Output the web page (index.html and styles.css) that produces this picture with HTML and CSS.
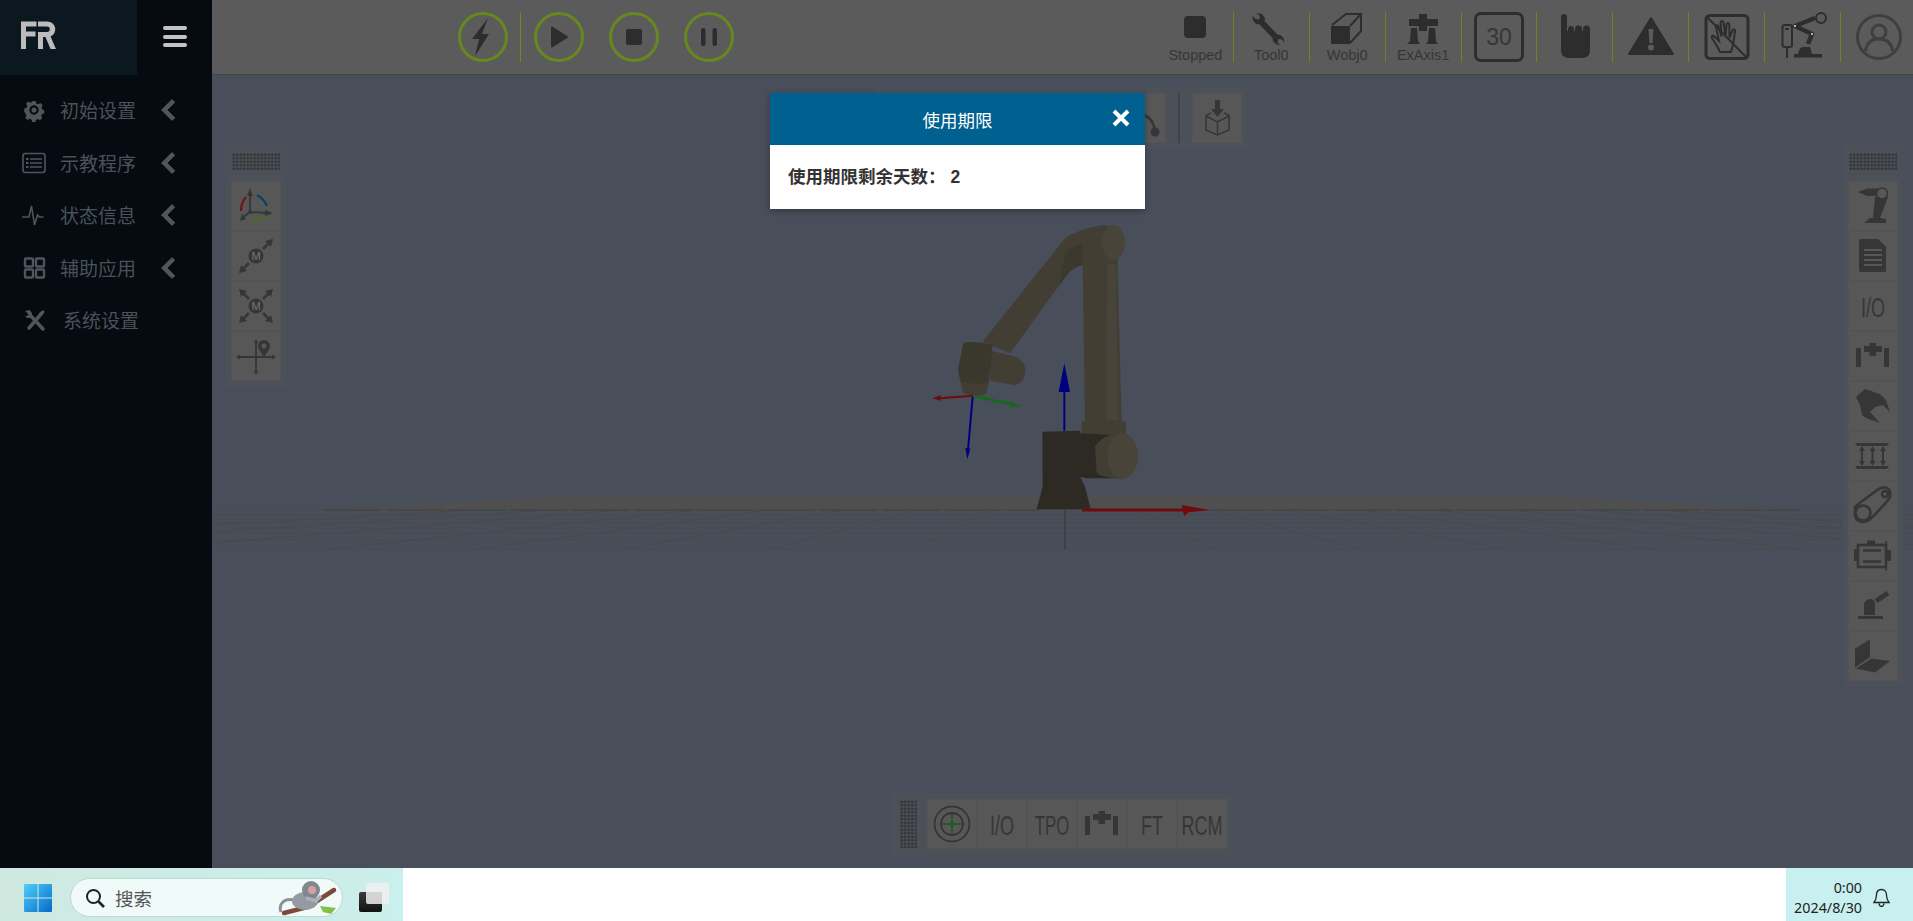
FILE: index.html
```html
<!DOCTYPE html>
<html lang="zh">
<head>
<meta charset="utf-8">
<title>使用期限</title>
<link rel="stylesheet" href="styles.css">
</head>
<body>
<div class="app">
  <div class="main">
    <aside class="sidebar">
      <div class="side-head">
        <div class="logo">
          <svg width="137" height="75" viewBox="0 0 137 75"><path class="logo-fill" d="M21 21.500h15.500v5H26v5h9.500v5H26v12.500h-5zM38 21.500h9.500a7.800 7.800 0 0 1 3 15L56 49h-5.500l-5-12H43v12h-5V32h9a2.700 2.700 0 0 0 0-5.500h-9z"/></svg>
        </div>
        <div class="burger"><span></span><span></span><span></span></div>
      </div>
      <nav class="menu">
        <div class="menu-row">
          <svg class="menu-ic" viewBox="0 0 24 24"><g transform="translate(1.800 1.800) scale(.85)"><path class="m-f" fill-rule="evenodd" d="M10 1.500h4l.7 2.800 2.300 1 2.500-1.500 2.700 2.800-1.500 2.500 1 2.300 2.300.6v4l-2.600.7-1 2.300 1.400 2.400-2.800 2.700-2.400-1.400-2.300 1-.7 2.300h-3.800l-.7-2.600-2.300-1-2.400 1.400-2.800-2.700 1.500-2.400-1-2.300L.5 14v-3.800l2.600-.7 1-2.300-1.500-2.500 2.800-2.800 2.500 1.500 2.300-1zM12 6.500a5.500 5.500 0 1 0 0 11 5.500 5.500 0 0 0 0-11zm0 2.500a3 3 0 1 1 0 6 3 3 0 0 1 0-6z"/></g></svg>
          <span class="menu-text">初始设置</span><i class="chev"></i>
        </div>
        <div class="menu-row">
          <svg class="menu-ic" viewBox="0 0 24 24"><rect class="m-s" x="1" y="2.500" width="22" height="19" rx="2.500"/><path class="m-s" d="M8 8h12M8 12h12M8 16h12"/><path class="m-f" d="M4 7h2.500v2H4zM4 11h2.500v2H4zM4 15h2.500v2H4z"/></svg>
          <span class="menu-text">示教程序</span><i class="chev"></i>
        </div>
        <div class="menu-row">
          <svg class="menu-ic" viewBox="0 0 24 24"><path class="m-s" d="M0 14h7l2.500-11 3 19 3-10 2 2h4"/></svg>
          <span class="menu-text">状态信息</span><i class="chev"></i>
        </div>
        <div class="menu-row">
          <svg class="menu-ic" viewBox="0 0 24 24"><rect class="m-t" x="3" y="2.500" width="8" height="8" rx="1"/><rect class="m-t" x="14" y="2.500" width="8" height="8" rx="1"/><rect class="m-t" x="3" y="13.500" width="8" height="8" rx="1"/><rect class="m-t" x="14" y="13.500" width="8" height="8" rx="1"/></svg>
          <span class="menu-text">辅助应用</span><i class="chev"></i>
        </div>
        <div class="menu-row">
          <svg class="menu-ic" viewBox="0 0 24 24"><path class="m-b" d="M8 7l13 14"/><path class="m-b" d="M20 5L7 20"/><path class="m-f" d="M3 3l4.500-1 2.500 3v2.500L7.500 10H5L2.500 7.500l2.500.8 1.500-2zM21.500 2l1 2-3 3.500-2.500-2.500z"/></svg>
          <span class="menu-text menu-text-wide">系统设置</span>
        </div>
      </nav>
    </aside>

    <section class="content">
      <header class="topbar">
        <div class="run-group">
          <button class="circle-btn circle-sep"><svg width="44" height="44" viewBox="0 0 44 44"><path class="d-f" d="M27 3L21 19h7L14 41l4-17h-7z"/></svg></button>
          <button class="circle-btn"><svg width="44" height="44" viewBox="0 0 44 44"><path class="d-f d-round" d="M15 12.500l15 9.500-15 9.500z"/></svg></button>
          <button class="circle-btn"><svg width="44" height="44" viewBox="0 0 44 44"><rect class="d-f" x="14" y="14" width="16" height="16" rx="2"/></svg></button>
          <button class="circle-btn"><svg width="44" height="44" viewBox="0 0 44 44"><rect class="d-f" x="14" y="13" width="4.500" height="18" rx="2"/><rect class="d-f" x="25.500" y="13" width="4.500" height="18" rx="2"/></svg></button>
        </div>
        <div class="status-group">
          <div class="status-item">
            <svg width="50" height="35" viewBox="0 0 50 35"><rect class="d-f" x="14" y="4" width="22" height="22" rx="4"/></svg>
            <span class="status-label">Stopped</span>
          </div>
          <div class="status-item">
            <svg width="50" height="35" viewBox="0 0 50 35"><path class="d-f" d="M10 1l6 1 3 4-.5 3 13 13.500 3 .5 3 3 1 5-2.500-3.500-3.500-.5-1 3.500 3 2.500-4-.5-3.500-3-.5-3.500-13-13.500-3.500-.5-3-3.500-.5-5 3 3.500 3.500.5 1-3.500z"/></svg>
            <span class="status-label">Tool0</span>
          </div>
          <div class="status-item">
            <svg width="50" height="35" viewBox="0 0 50 35"><path class="d-f" d="M9 14h19v18H9z"/><path class="d-o" d="M10 13L24 2h15v17L28 31M28 14L39 2"/></svg>
            <span class="status-label">Wobj0</span>
          </div>
          <div class="status-item">
            <svg width="50" height="35" viewBox="0 0 50 35"><path class="d-f" d="M21 2h8v5h11v7H29v5h-8v-5H11V7h10zM13 16h6l1 13 2 3H9l3-3zM31 16h6l1 13 2 3H28l2-3z"/></svg>
            <span class="status-label">ExAxis1</span>
          </div>
          <div class="status-item">
            <div class="speed-box">30</div>
          </div>
          <div class="status-item">
            <svg width="50" height="50" viewBox="0 0 50 50"><path class="d-f" d="M11 5a3 3 0 0 1 6 0V19h1v-2a3 3 0 0 1 6 0v2h1v-2a3.500 3.500 0 0 1 7 0v2h1v-2a3.500 3.500 0 0 1 7 0V38q0 8-8 8H19q-8 0-8-8z"/></svg>
          </div>
          <div class="status-item">
            <svg width="50" height="50" viewBox="0 0 50 50"><path class="d-f d-round" d="M25 6L47 42H3z"/><path class="d-bg" d="M22.500 17h5l-.9 14h-3.200z"/><circle class="d-bg" cx="25" cy="35.500" r="3"/></svg>
          </div>
          <div class="status-item">
            <svg width="50" height="50" viewBox="0 0 50 50"><rect class="d-o-b" x="4" y="3.500" width="42" height="43" rx="4"/><path class="d-o" d="M5 5l40 41"/><path class="d-o" d="M15 34l-5-8c-1-2 1-3 2.500-1.500L17 29l-3-14c-.5-2 2-2.500 2.500-.5l3 10-1-14c0-2 2.500-2 3 0l2 13 1-11c.2-2 2.800-2 2.800 0l.2 13 3-7c1-2 3-1 2.500 1L31 33l-2 7H18z"/></svg>
          </div>
          <div class="status-item">
            <svg width="50" height="50" viewBox="0 0 50 50"><rect class="d-o" x="4.500" y="13" width="9.500" height="22" rx="2"/><path class="d-o" d="M7 17h4M9 35v11"/><path class="d-f" d="M16 42h28v3.500H16zM20 42l2-6 3-1h7l2 7z"/><path class="d-thick" d="M30 32l4-10-17-8 20-8"/><circle class="d-o" cx="43" cy="6" r="5"/><circle class="d-dot" cx="34" cy="22" r="1"/><circle class="d-dot" cx="17" cy="14" r="1"/></svg>
          </div>
          <div class="status-item status-last">
            <svg width="50" height="50" viewBox="0 0 50 50"><circle class="a-s" cx="25" cy="25" r="21.500"/><circle class="a-s" cx="25" cy="20" r="7"/><path class="a-s" d="M11.500 39c1-8 6-12 13.500-12s12.500 4 13.500 12"/></svg>
          </div>
        </div>
      </header>

      <div class="stage">
        <svg class="scene" viewBox="212 75 1701 793" preserveAspectRatio="none">
          <polygon class="floor" points="558,496 1558,496 1808,510 320,510"/>
          <g class="grid">
            <path d="M212 510H1913M212 515H1913M212 519H1913M212 523H1913M212 528H1913M212 533H1913M212 540H1913M212 549H1913"/>
            <path d="M991 510L918 549M917 510L771 549M843 510L624 549M769 510L477 549M695 510L330 549M621 510L212 543M547 510L212 532M473 510L212 525M1139 510L1212 549M1213 510L1359 549M1287 510L1506 549M1361 510L1653 549M1435 510L1800 549M1509 510L1913 545M1583 510L1913 533M1657 510L1913 526"/>
          </g>
          <path class="horizon" d="M325 510H1040M1210 510H1800"/>
          <path class="center-line" d="M1065 510V549"/>
          <path class="axis-r" d="M1082 510H1184"/>
          <polygon class="axis-r-f" points="1182,505 1210,510 1182,513 1190,511 1184,516"/>
          <g transform="translate(900 210) scale(.33333)">
            <path class="rb-mid" d="M495 85Q540 55 610 45L650 50 655 150 550 165Q520 170 500 195L330 430 248 395z"/>
            <path class="rb-deep" d="M495 130Q515 110 548 100V165Q520 170 500 195L478 225z"/>
            <path class="rb-mid" d="M548 150H652L665 640H555z"/>
            <path class="rb-light" d="M622 165Q635 155 648 170L655 640H618z"/>
            <path class="rb-mid" d="M545 635Q610 620 678 635V690H545z"/>
            <ellipse class="rb-light" cx="640" cy="97" rx="35" ry="52"/>
            <path class="rb-dark" d="M427 665L540 662V800L555 830 572 898H410L428 830z"/>
            <path class="rb-dark" d="M470 700L540 670 640 675 665 805H560L480 790z"/>
            <path class="rb-mid" d="M585 710Q610 670 665 672V806Q610 805 590 790z"/>
            <ellipse class="rb-light" cx="668" cy="738" rx="46" ry="68"/>
            <path class="rb-mid" d="M270 422L340 438Q378 450 376 485 370 525 340 525L270 512z"/>
            <path class="rb-dim" d="M190 398Q235 392 278 405L266 520Q225 528 182 515 170 480 178 460z"/>
            <path class="rb-mid" d="M182 515Q225 525 266 518L258 552Q225 565 188 548z"/>
            <path class="ax-blue" d="M493 662V540"/>
            <polygon class="ax-blue-f" points="476,546 510,546 493,460"/>
            <path class="ax-red" d="M218 557L118 565"/>
            <polygon class="ax-red-f" points="97,565 122,556 122,572"/>
            <path class="ax-green" d="M222 558L340 584"/>
            <polygon class="ax-green-f" points="362,588 332,576 332,592"/>
            <path class="ax-blue" d="M218 560L204 720"/>
            <polygon class="ax-blue-f" points="196,714 211,716 202,748"/>
          </g>
        </svg>

        <div class="panel panel-top">
          <div class="tile"><svg width="50" height="50" viewBox="0 0 50 50"><path class="t-s" d="M28 22Q37 25 39 38"/><circle class="t-f" cx="39" cy="39" r="4.500"/></svg></div>
          <div class="panel-sep"></div>
          <div class="tile"><svg width="50" height="50" viewBox="0 0 50 50"><path class="t-f" d="M23 7h5v9h4l-6.500 8-6.500-8h4z"/><path class="t-thin" d="M19 20l-5 2.500V37l11.500 5 11.500-5V22.500L32 20M14 23l11.500 6 11.500-6M25.500 29v13"/></svg></div>
        </div>

        <div class="panel panel-left">
          <div class="grip"></div>
          <div class="tile"><svg width="50" height="50" viewBox="0 0 50 50"><path class="t-m" d="M19 31V12M19 31l18 1M19 31l-8 6"/><polygon class="t-f" points="19,7 16,15 22,15"/><polygon class="t-f" points="42,32 34,29 34,35"/><polygon class="t-f" points="9,40 11,33 15,38"/><circle class="t-f" cx="19" cy="31" r="2"/><path class="arc-r" d="M15 16Q10 22 10 30"/><path class="arc-b" d="M26 14Q33 18 36 25"/><path class="arc-g" d="M19 39Q27 39 34 36"/></svg></div>
          <div class="tile"><svg width="50" height="50" viewBox="0 0 50 50"><path class="t-s" d="M32 18l6-6M18 32l-6 6"/><polygon class="t-f" points="42,8 40,16 34,10"/><polygon class="t-f" points="8,42 10,34 16,40"/><circle class="t-f" cx="25" cy="25" r="7.500"/><text class="m-mark" x="25" y="29">M</text></svg></div>
          <div class="tile"><svg width="50" height="50" viewBox="0 0 50 50"><path class="t-s" d="M32 18l6-6M18 32l-6 6M18 18l-6-6M32 32l6 6"/><polygon class="t-f" points="42,8 40,16 34,10"/><polygon class="t-f" points="8,42 10,34 16,40"/><polygon class="t-f" points="8,8 16,10 10,16"/><polygon class="t-f" points="42,42 34,40 40,34"/><circle class="t-f" cx="25" cy="25" r="7.500"/><text class="m-mark" x="25" y="29">M</text></svg></div>
          <div class="tile"><svg width="50" height="50" viewBox="0 0 50 50"><path class="t-m" d="M9 26H41M25 11V41"/><polygon class="t-f" points="9,23.500 9,28.500 5,26"/><polygon class="t-f" points="41,23.500 41,28.500 45,26"/><polygon class="t-f" points="22.500,12 27.500,12 25,8"/><polygon class="t-f" points="22.500,40 27.500,40 25,44"/><path class="t-f" fill-rule="evenodd" d="M33 9a6 6 0 0 1 6 6c0 3-3 7-6 11-3-4-6-8-6-11a6 6 0 0 1 6-6zm0 3.500a2.500 2.500 0 1 0 0 5 2.500 2.500 0 0 0 0-5z"/></svg></div>
        </div>

        <div class="panel panel-right">
          <div class="grip"></div>
          <div class="tile"><svg width="50" height="50" viewBox="0 0 50 50"><path class="t-f" d="M10 11l9-3.500h14V15H19zM27 16H40L32 37l6 1v4H16l6-5h3z"/><circle class="t-ring" cx="34" cy="12.500" r="5.500"/></svg></div>
          <div class="tile"><svg width="50" height="50" viewBox="0 0 50 50"><path class="t-f" d="M11 10q0-2 2-2h17l8 8v24q0 1-1 1H13q-2 0-2-2z"/><path class="t-cut" d="M16 19H34M16 24H34M16 29H34M16 34H34"/></svg></div>
          <div class="tile"><svg width="50" height="50" viewBox="0 0 50 50"><text class="io-text" transform="translate(25 35.500) scale(1 1.550)">I/O</text></svg></div>
          <div class="tile"><svg width="50" height="50" viewBox="0 0 50 50"><path class="t-f" d="M8 17h5v19H8zM36 17h5v19h-5zM16 15h5.500v-3h6.500v3h6v6h-6v4h-6.500v-4H16z"/></svg></div>
          <div class="tile"><svg width="50" height="50" viewBox="0 0 50 50"><path class="t-f" d="M8 16L17 8l15 5 6 6 4 12-7-7-8 2-5 5 10 11-14-5-4-3-2-10z"/></svg></div>
          <div class="tile"><svg width="50" height="50" viewBox="0 0 50 50"><path class="t-f" d="M7 12h34l-2 3H9zM7 35h34l-2 3H9z"/><path class="t-thin2" d="M14 18v14M24.500 18v14M35 18v14"/><path class="t-f" d="M14 15l-3 5h6zM14 35l-3-5h6zM24.500 15l-3 5h6zM24.500 35l-3-5h6zM35 15l-3 5h6zM35 35l-3-5h6z"/></svg></div>
          <div class="tile"><svg width="50" height="50" viewBox="0 0 50 50"><circle class="t-s" cx="15" cy="32" r="7.500"/><circle class="t-s" cx="37" cy="13" r="3"/><path class="t-s" d="M7 26C10 23 30 8 33 7c5-2 11 1 9 9-1 3-18 21-21 23-6 4-15 1-14-7 0-2 0-5 0-6z"/></svg></div>
          <div class="tile"><svg width="50" height="50" viewBox="0 0 50 50"><rect class="t-s" x="10" y="14" width="28" height="22"/><path class="t-f" d="M19 9.500h8V14h-8zM6 18h4v12H6zM38 19h5v11h-5z"/><path class="t-thin" d="M38 10v30"/><path class="t-s" d="M15 19.500H33M15 30.500H33"/></svg></div>
          <div class="tile"><svg width="50" height="50" viewBox="0 0 50 50"><path class="t-f" d="M10 35h25v3H10zM16 34V22q3-4 6-4 4 0 5 4v12z"/><path class="t-b" d="M28 20l12-8"/></svg></div>
          <div class="tile"><svg width="50" height="50" viewBox="0 0 50 50"><path class="t-f" d="M7 17.500L22 8.500V26L7 36.500z"/><path class="t-f" d="M8 37.500L23.500 27.500 42 30 27 41.500z"/></svg></div>
        </div>

        <div class="panel panel-bottom">
          <div class="grip grip-v"></div>
          <div class="tile"><svg width="50" height="50" viewBox="0 0 50 50"><circle class="t-m" cx="25" cy="25" r="17.500"/><circle class="t-m" cx="25" cy="25" r="11"/><path class="cross-g" d="M15 25H35M25 15V35"/><circle class="cross-c" cx="25" cy="25" r="2"/></svg></div>
          <div class="tile"><svg width="50" height="50" viewBox="0 0 50 50"><text class="io-text" transform="translate(25 36) scale(1 1.550)">I/O</text></svg></div>
          <div class="tile"><svg width="50" height="50" viewBox="0 0 50 50"><text class="io-text" transform="translate(25 36) scale(.93 1.550)">TPO</text></svg></div>
          <div class="tile"><svg width="50" height="50" viewBox="0 0 50 50"><path class="t-f" d="M8 17h5v19H8zM36 17h5v19h-5zM16 15h5.500v-3h6.500v3h6v6h-6v4h-6.500v-4H16z"/></svg></div>
          <div class="tile"><svg width="50" height="50" viewBox="0 0 50 50"><text class="io-text" transform="translate(25 36) scale(1 1.550)">FT</text></svg></div>
          <div class="tile"><svg width="50" height="50" viewBox="0 0 50 50"><text class="io-text" transform="translate(25 36) scale(1 1.550)">RCM</text></svg></div>
        </div>
      </div>
    </section>
  </div>

  <footer class="taskbar">
    <div class="task-left">
      <svg class="win" width="30" height="30" viewBox="0 0 30 30">
        <defs><linearGradient id="wg" x1="0" y1="0" x2="1" y2="1"><stop offset="0" stop-color="#4fd0fa"/><stop offset="1" stop-color="#0469c9"/></linearGradient></defs>
        <path fill="url(#wg)" d="M1 2q0-1 1-1h12.500v13.500H1zM15.500 1H28q1 0 1 1v12.500H15.500zM1 15.500h13.500V29H2q-1 0-1-1zM15.500 15.500H29V28q0 1-1 1H15.500z"/>
      </svg>
      <div class="search">
        <svg width="20" height="20" viewBox="0 0 20 20"><circle class="s-s" cx="8.500" cy="8.500" r="6.500"/><path class="s-s s-h" d="M13.500 13.500L19 19"/></svg>
        <span class="search-text">搜索</span>
        <svg class="monkey" width="60" height="36" viewBox="0 0 60 36"><path class="mk-leaf" d="M42 26l16 2-5 6-8-2z"/><path class="mk-branch" d="M6 33L30 27 56 10"/><path class="mk-tail" d="M16 20C6 18 0 24 3 32"/><ellipse class="mk-body" cx="27" cy="21" rx="13" ry="9"/><circle class="mk-head" cx="33" cy="10" r="9"/><circle class="mk-face" cx="34" cy="10" r="4"/><path class="mk-arm" d="M28 18l10 3 5-5"/></svg>
      </div>
      <div class="taskview"><span class="tv-back"></span><span class="tv-front"></span></div>
    </div>
    <div class="task-right">
      <div class="clock"><span>0:00</span><span>2024/8/30</span></div>
      <svg width="17" height="20" viewBox="0 0 17 20"><path class="bell" d="M8.500 1.500c-3.500 0-5 2.500-5 5.500 0 4-1 5.500-2.500 7.500h15c-1.500-2-2.500-3.500-2.500-7.500 0-3-1.500-5.500-5-5.500zM6 15.500c.3 2 1.300 3 2.500 3s2.200-1 2.500-3"/></svg>
    </div>
  </footer>

  <div class="dialog">
    <div class="dialog-head">
      <span>使用期限</span>
      <svg class="dialog-x" width="18" height="18" viewBox="0 0 18 18"><path d="M2 2L16 16M16 2L2 16"/></svg>
    </div>
    <div class="dialog-body">使用期限剩余天数：<span class="days">2</span></div>
  </div>
</div>
</body>
</html>
```

FILE: styles.css
```css
* { box-sizing: border-box; }
html, body { margin: 0; height: 100%; overflow: hidden; }
body { font-family: "Liberation Sans", "Noto Sans CJK SC", sans-serif; background: #fff; }
svg { display: block; flex: none; }

.app { position: relative; display: flex; flex-direction: column; height: 921px; }
.main { display: flex; height: 868px; }

/* sidebar */
.sidebar { width: 212px; background: #050b10; flex: none; }
.side-head { display: flex; height: 75px; }
.logo { width: 137px; background: #0b181f; }
.logo-fill { fill: #bcbcbc; }
.burger { display: flex; flex-direction: column; justify-content: space-between; width: 24px; height: 21px; margin: 26px 0 0 26px; }
.burger span { height: 4px; border-radius: 2px; background: #c4c4c4; }
.menu { padding-top: 9px; }
.menu-row { display: flex; align-items: center; height: 52.5px; padding: 0 37px 0 22px; }
.menu-ic { width: 24px; height: 24px; }
.menu-text { margin-left: 14px; font-size: 19px; line-height: 24px; color: #49525a; font-family: "Noto Sans CJK SC", sans-serif; }
.menu-text-wide { margin-left: 17px; }
.chev { width: 16px; height: 16px; margin-left: auto; border-left: 5px solid #4e555b; border-bottom: 5px solid #4e555b; transform: translateX(5px) rotate(45deg); border-radius: 1px; }
.m-f { fill: #4e565c; }
.m-s { fill: none; stroke: #4e565c; stroke-width: 1.6; }
.m-t { fill: none; stroke: #4e565c; stroke-width: 2.4; }
.m-b { fill: none; stroke: #4e565c; stroke-width: 3.5; stroke-linecap: round; }

/* top bar */
.content { flex: 1; display: flex; flex-direction: column; min-width: 0; }
.topbar { display: flex; height: 75px; padding-top: 12px; background: #5b5b5b; border-bottom: 1px solid #454545; flex: none; }
.run-group { display: flex; margin-left: 246px; }
.circle-btn { display: flex; align-items: center; justify-content: center; width: 50px; height: 50px; padding: 0; margin-right: 25px; background: none; border: 3px solid #67881e; border-radius: 50%; }
.circle-sep { position: relative; margin-right: 26px; }
.circle-sep::after { content: ""; position: absolute; left: 59px; top: -3px; width: 1px; height: 50px; background: #6a8b1f; }
.d-f { fill: #2d2d2d; }
.d-bg { fill: #5b5b5b; }
.d-round { stroke: #2d2d2d; stroke-width: 2; stroke-linejoin: round; }
.status-group { display: flex; margin-left: auto; }
.status-item { display: flex; flex-direction: column; align-items: center; width: 75.9px; height: 50px; border-right: 1px solid #68861f; }
.status-last { width: 72px; border-right: 0; align-items: flex-start; padding-left: 13px; }
.status-label { font-size: 14.5px; line-height: 17px; color: #363636; white-space: nowrap; }
.speed-box { width: 50px; height: 50px; display: flex; align-items: center; justify-content: center; border: 3px solid #2d2d2d; border-radius: 7px; font-size: 23px; color: #363636; }
.d-o { fill: none; stroke: #2d2d2d; stroke-width: 2; }
.d-o-b { fill: none; stroke: #2d2d2d; stroke-width: 3; }
.d-thick { fill: none; stroke: #2d2d2d; stroke-width: 4.5; stroke-linejoin: round; }
.d-dot { fill: #ddd; }
.a-s { fill: none; stroke: #3f3f3f; stroke-width: 3; }

/* stage */
.stage { position: relative; flex: 1; background: #484e5a; overflow: hidden; }
.scene { position: absolute; inset: 0; width: 100%; height: 100%; }
.floor { fill: #4f4f50; }
.grid path { fill: none; stroke: #4a4a4a; stroke-width: 1; }
.horizon { fill: none; stroke: #444; stroke-width: 1.5; stroke-dasharray: 56 6; }
.center-line { stroke: #333; stroke-width: 1; }
.axis-r { stroke: #700b0b; stroke-width: 3; }
.axis-r-f { fill: #700b0b; }
.rb-mid { fill: #423e34; }
.rb-deep { fill: #3b382e; }
.rb-dark { fill: #2c2a23; }
.rb-dim { fill: #3a372d; }
.rb-light { fill: #484439; }
.ax-blue { stroke: #00007e; stroke-width: 6; fill: none; }
.ax-blue-f { fill: #00007e; }
.ax-red { stroke: #700b0b; stroke-width: 6; fill: none; }
.ax-red-f { fill: #700b0b; }
.ax-green { stroke: #0d6e12; stroke-width: 7; fill: none; }
.ax-green-f { fill: #0d6e12; }

/* floating tool panels */
.panel { position: absolute; display: flex; background: #4c5059; }
.panel-left, .panel-right { flex-direction: column; align-items: center; top: 68px; padding-top: 10px; }
.panel-left { left: 13px; width: 62px; height: 243px; }
.panel-right { left: 1631px; width: 60px; height: 543px; }
.panel-top { left: 665px; top: 12px; width: 371px; height: 62px; padding: 6px; justify-content: flex-end; }
.panel-bottom { left: 678px; top: 718px; width: 343px; height: 64px; padding: 6px; align-items: flex-start; }
.panel-sep { width: 2px; height: 50px; margin: 0 12px; background: #424242; }
.tile { width: 50px; height: 50px; background: #575757; border-radius: 1px; flex: none; box-shadow: inset 0 0 0 1px #545454; }
.grip { width: 48px; height: 17px; margin-bottom: 11px; background-image: radial-gradient(circle, #333 1.2px, transparent 1.5px); background-size: 3.500px 3.500px; flex: none; }
.grip-v { width: 17px; height: 48px; margin: 1px 10px 0 4px; }
.t-f { fill: #363636; }
.t-s { fill: none; stroke: #363636; stroke-width: 2.6; }
.t-m { fill: none; stroke: #363636; stroke-width: 1.8; }
.t-b { fill: none; stroke: #363636; stroke-width: 5; }
.t-thin { fill: none; stroke: #363636; stroke-width: 1.500; }
.t-thin2 { fill: none; stroke: #363636; stroke-width: 2; }
.t-cut { fill: none; stroke: #575757; stroke-width: 1.800; }
.t-ring { fill: #575757; stroke: #363636; stroke-width: 1.5; }
.arc-r { fill: none; stroke: #6e1616; stroke-width: 2.2; }
.arc-b { fill: none; stroke: #0a4263; stroke-width: 2.2; }
.arc-g { fill: none; stroke: #456d14; stroke-width: 2.2; }
.m-mark { font-size: 11px; fill: #777; text-anchor: middle; font-family: "Liberation Sans", sans-serif; }
.io-text { font-size: 18px; fill: #363636; text-anchor: middle; font-family: "Liberation Sans", sans-serif; }
.cross-g { fill: none; stroke: #145a14; stroke-width: 1.5; }
.cross-c { fill: #1d5a1d; }

/* task bar */
.taskbar { display: flex; justify-content: space-between; height: 53px; background: #fff; flex: none; }
.task-left { display: flex; align-items: center; width: 403px; padding: 6px 0 0 23px; background: linear-gradient(90deg, #cfe9e0, #cbefec); }
.search { display: flex; align-items: center; width: 273px; height: 39px; margin-left: 17px; padding-left: 14px; background: #f0faf8; border: 1px solid #bcd8d2; border-radius: 20px; }
.search-text { margin-left: 10px; font-size: 18.5px; color: #555; font-family: "Noto Sans CJK SC", sans-serif; }
.monkey { margin: 0 0 0 auto; transform: translateX(-4px); }
.s-s { fill: none; stroke: #222; stroke-width: 2; }
.s-h { stroke-width: 2.6; }
.mk-leaf { fill: #7fc24a; }
.mk-branch { fill: none; stroke: #7c4a3a; stroke-width: 4.500; stroke-linecap: round; }
.mk-tail { fill: none; stroke: #8b8f96; stroke-width: 3; }
.mk-body { fill: #949aa2; }
.mk-head { fill: #7f8790; }
.mk-face { fill: #d9a0a0; }
.mk-arm { fill: none; stroke: #aab0b6; stroke-width: 3.500; }
.taskview { position: relative; width: 30px; height: 29px; margin-left: 16px; }
.tv-back { position: absolute; left: 0; bottom: 0; width: 23px; height: 20px; border-radius: 2px; background: linear-gradient(#3c3c3c, #111); }
.tv-front { position: absolute; right: 0; top: 0; width: 23px; height: 21px; border-radius: 2px; background: rgba(240, 240, 240, .85); }
.task-right { display: flex; align-items: center; width: 127px; padding-top: 6px; background: #c8f0f0; justify-content: flex-end; }
.clock { display: flex; flex-direction: column; align-items: flex-end; margin-right: 11px; font-family: "Noto Sans", sans-serif; font-size: 14.3px; line-height: 20px; color: #222; }
.task-right svg { margin-right: 23px; }
.bell { fill: none; stroke: #222; stroke-width: 1.3; }

/* dialog */
.dialog { position: absolute; left: 770px; top: 93px; width: 375px; background: #fff; box-shadow: 0 2px 6px rgba(0, 0, 0, .3); }
.dialog-head { position: relative; display: flex; align-items: center; justify-content: center; height: 52px; background: #00608f; color: #fff; font-size: 17.5px; font-family: "Noto Sans CJK SC", sans-serif; }
.dialog-x { position: absolute; right: 15px; top: 16px; }
.dialog-x path { fill: none; stroke: #fff; stroke-width: 4; }
.dialog-body { height: 64px; padding: 19px 0 0 18px; font-size: 17.5px; line-height: 26px; font-weight: 700; color: #333; font-family: "Liberation Sans", "Noto Sans CJK SC", sans-serif; }
.days { margin-left: 5px; }
```
